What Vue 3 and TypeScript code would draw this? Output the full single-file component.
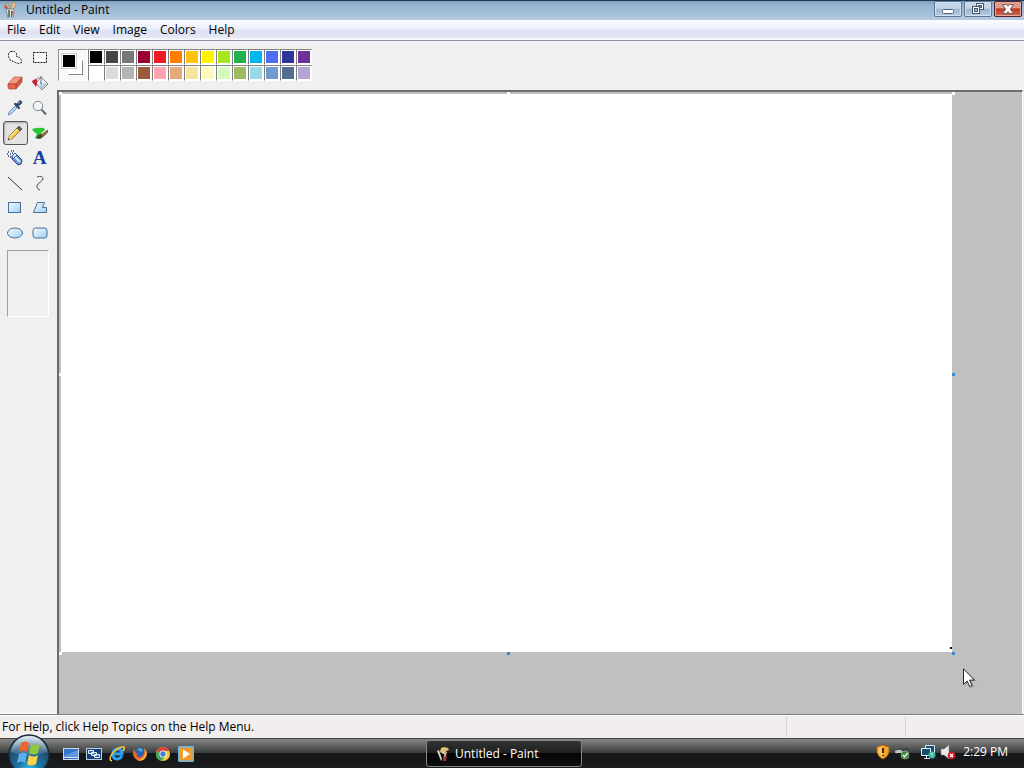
<script setup lang="ts">
import { ref } from 'vue'

const menus: string[] = ['File', 'Edit', 'View', 'Image', 'Colors', 'Help']

const tools: string[] = [
  'Free-Form Select', 'Select', 'Eraser', 'Fill With Color',
  'Pick Color', 'Magnifier', 'Pencil', 'Brush',
  'Airbrush', 'Text', 'Line', 'Curve',
  'Rectangle', 'Polygon', 'Ellipse', 'Rounded Rectangle',
]
const activeTool = ref<string>('Pencil')

const colors: string[] = [
  '#000000', '#464646', '#787878', '#990030', '#ed1c24', '#ff7e00', '#ffc20e',
  '#fff200', '#a8e61d', '#22b14c', '#00b7ef', '#4d6df3', '#2f3699', '#6f3198',
  '#ffffff', '#dcdcdc', '#b4b4b4', '#9c5a3c', '#ffa3b1', '#e5aa7a', '#f5e49c',
  '#fff9bd', '#d3f9bc', '#9dbb61', '#99d9ea', '#709ad1', '#546d8e', '#b5a5d5',
]
const foreground = ref<string>('#000000')

const handles: string[] = ['tl', 'tc', 'tr', 'ml', 'mr', 'bl', 'bc', 'br']
</script>

<template>
  <div class="desktop">
    <header class="titlebar">
      <svg class="app-icon" viewBox="0 0 16 16" aria-hidden="true">
        <path d="M5 7 3 2l2-1 3 6zM9 7l1-6 3-1 1 3-3 5z" fill="#e5c28d" stroke="#99784f" stroke-width=".6" />
        <path d="M3 3 2 5l3 3 1-3z" fill="#c95740" />
        <path d="M4 7h8l-1 9H6z" fill="#dce6e5" stroke="#62747b" stroke-width=".7" />
        <path d="M6 8h2v7H6z" fill="#66806b" /><path d="M9 9h2l-1 6H9z" fill="#bd352b" />
      </svg>
      <h1>Untitled - Paint</h1>
      <div class="window-buttons">
        <button aria-label="Minimize">
          <svg width="26" height="14" viewBox="0 0 26 14"><rect x="7.500" y="7.500" width="11" height="4" rx="1" fill="#fff" stroke="#526277" /></svg>
        </button>
        <button aria-label="Restore">
          <svg width="26" height="14" viewBox="0 0 26 14" stroke="#465870"><rect x="11.500" y="1.500" width="7" height="6" fill="#fff" /><rect x="13.500" y="3.500" width="3" height="2" fill="#9fb3cc" /><rect x="7.500" y="4.500" width="7" height="7" fill="#fff" /><rect x="9.500" y="6.500" width="3" height="3" fill="#9fb3cc" /></svg>
        </button>
        <button class="close" aria-label="Close">
          <svg width="26" height="14" viewBox="0 0 26 14"><path d="M7.500 2.500h4L13 4.300l1.500-1.800h4L15.300 7l3.200 4.500h-4L13 9.700l-1.500 1.800h-4L10.700 7z" fill="#fff" stroke="#623c3c" stroke-width=".8" /></svg>
        </button>
      </div>
    </header>

    <nav class="menubar">
      <button v-for="m in menus" :key="m">{{ m }}</button>
    </nav>

    <main class="body">
      <aside class="toolbox">
        <div class="tools">
          <button
            v-for="t in tools"
            :key="t"
            :aria-label="t"
            :class="{ active: t === activeTool }"
            @click="activeTool = t"
          >
            <svg v-if="t !== 'Text'" width="16" height="16" viewBox="0 0 16 16" fill="none">
              <defs>
                <linearGradient id="blueFill" x1="0" y1="0" x2="1" y2="1">
                  <stop offset="0" stop-color="#f2faff" /><stop offset="1" stop-color="#9fd0f5" />
                </linearGradient>
              </defs>
              <path v-if="t === 'Free-Form Select'" d="M3.500 1.500h4l2 2v3l3 1 2 3v2l-3 1-3-1-2-1-3-1-2-4v-3z" fill="#fafafa" stroke="#111" stroke-dasharray="2 1" />
              <path v-else-if="t === 'Select'" d="M1.500 2.500h13v10h-13z" fill="#fafafa" stroke="#111" stroke-dasharray="2 1" />
              <g v-else-if="t === 'Eraser'">
                <path d="M7 2h8L9 9H1z" fill="#f49a83" stroke="#bb4f3b" stroke-width=".7" />
                <path d="M1 9h8v5H2l-1-2z" fill="#e8694f" stroke="#aa4030" stroke-width=".7" />
                <path d="m15 2-6 7v5l6-7z" fill="#cf5640" stroke="#a43b2d" stroke-width=".6" />
              </g>
              <g v-else-if="t === 'Fill With Color'">
                <path d="m4 8 5-6 7 7-6 6z" fill="#eef3f5" stroke="#6b777e" stroke-width=".9" />
                <path d="m10 14 5-5-2-1-6 4z" fill="#b4c8d3" />
                <path d="M9 1v7" stroke="#666" stroke-width=".9" />
                <path d="M8 3Q5 2 3 5" stroke="#888" stroke-width=".8" />
                <path d="m5 4-4 1-1 2 1 1 3 4 1-3z" fill="#c72435" />
                <circle cx="9" cy="8.500" r="1.200" fill="#5fa9bd" />
              </g>
              <g v-else-if="t === 'Pick Color'">
                <path d="m1 15 1-3 6-6 2 2-6 6z" fill="#b4d3f1" stroke="#6287ae" stroke-width=".8" />
                <path d="m7 4 5 5 1-1-2-2 3-2c2-2 0-4-2-3L10 4 8 3z" fill="#35466f" stroke="#202d4e" stroke-width=".6" />
                <path d="m11 3 2-1" stroke="#aebfe3" />
              </g>
              <g v-else-if="t === 'Magnifier'">
                <circle cx="6" cy="6" r="4.700" fill="#f3f6f8" stroke="#7d8286" />
                <path d="M4 4q1-1 3-1" stroke="#fff" /><path d="m9.500 9.500 4.500 5" stroke="#63686e" stroke-width="2" />
              </g>
              <g v-else-if="t === 'Pencil'">
                <path d="m1 15 1-4 8-8 3 3-8 8z" fill="#f6ca55" stroke="#8c6c24" stroke-width=".8" />
                <path d="m3 11 8-7" stroke="#fff3a7" /><path d="m1 15 1-4 3 3z" fill="#f5d7a5" /><path d="m1 15 .5-2 1.500 1.500z" fill="#222" />
                <path d="m10 3 2-2 3 3-2 2z" fill="#6a6270" stroke="#3b3947" stroke-width=".7" />
              </g>
              <g v-else-if="t === 'Brush'">
                <path d="M0 4q6-2 12-1l1 2-4 3 1 4-4 2-3-1 2-4-3-2z" fill="#26c836" />
                <path d="m16 5-6 4-2 1 1 2 3-1 4-4z" fill="#96764b" stroke="#554126" stroke-width=".6" />
                <path d="m9 9-3 1-2 3 4 1 3-2z" fill="#4a4a2d" />
              </g>
              <g v-else-if="t === 'Airbrush'">
                <path d="M1 2h1M4 1h1M3 4h1M1 6h1M5 3h1M3 7h1M0 4h1M6 1h1" stroke="#233f87" stroke-width="1.400" />
                <path d="m5 6 3-3 7 7-1 4-3 1-6-6z" fill="#6d98da" stroke="#244078" />
                <path d="m7 6 6 6" stroke="#d1e8ff" stroke-width="2" /><path d="m5 6 3-3 2 2-4 4z" fill="#dbe6f4" stroke="#30497d" stroke-width=".8" />
              </g>
              <path v-else-if="t === 'Line'" d="m1 2 14 13" stroke="#333" />
              <path v-else-if="t === 'Curve'" d="M5 2q6-2 6 2Q10 6 6 9q-3 4 2 6" stroke="#4e4e4e" />
              <rect v-else-if="t === 'Rectangle'" x="1.500" y="2.500" width="12" height="10" fill="url(#blueFill)" stroke="#456f96" />
              <path v-else-if="t === 'Polygon'" d="M5.500 2.500h7l-2 5h4v5h-13z" fill="url(#blueFill)" stroke="#52718f" />
              <ellipse v-else-if="t === 'Ellipse'" cx="8" cy="8" rx="7.500" ry="5" fill="url(#blueFill)" stroke="#456f96" />
              <rect v-else-if="t === 'Rounded Rectangle'" x="1" y="3" width="14" height="10" rx="2.500" fill="url(#blueFill)" stroke="#456f96" />
            </svg>
            <span v-else class="letter">A</span>
          </button>
        </div>
        <div class="options"></div>
      </aside>

      <section class="editor">
        <div class="palette">
          <div class="current">
            <div class="pair">
              <span class="back"></span>
              <span class="fore" :style="{ backgroundColor: foreground }"></span>
            </div>
          </div>
          <div class="swatches">
            <button
              v-for="c in colors"
              :key="c"
              :aria-label="'Color ' + c"
              :style="{ backgroundColor: c }"
              @click="foreground = c"
            ></button>
          </div>
        </div>
        <div class="workspace">
          <div class="sheet">
            <i v-for="h in handles" :key="h" class="handle" :class="h"></i>
            <i class="dot"></i>
          </div>
          <svg class="pointer" width="14" height="20" viewBox="0 0 14 20">
            <path d="M2 3v15l4-4 2 6 3-1-2-6h5z" fill="#777" opacity=".35" />
            <path d="M.5.8v15.500l3.600-3.300 2.600 5.500 2.400-1-2.500-5.400h4.800z" fill="#fff" stroke="#222" />
          </svg>
        </div>
      </section>
    </main>

    <footer class="statusbar">
      <p>For Help, click Help Topics on the Help Menu.</p>
      <span></span>
      <span></span>
    </footer>

    <div class="taskbar">
      <div class="launch">
        <button class="start" aria-label="Start">
          <svg width="42" height="42" viewBox="0 0 42 42">
            <defs>
              <radialGradient id="orb" cx=".5" cy=".92" r=".85">
                <stop offset="0" stop-color="#35d4ef" /><stop offset=".35" stop-color="#1b75a7" /><stop offset=".75" stop-color="#234c6c" /><stop offset="1" stop-color="#8da9ba" />
              </radialGradient>
              <linearGradient id="shine" x1="0" y1="0" x2="0" y2="1">
                <stop offset="0" stop-color="#e9f2f7" stop-opacity=".9" /><stop offset="1" stop-color="#7da4ba" stop-opacity=".25" />
              </linearGradient>
            </defs>
            <circle cx="21" cy="21" r="20" fill="url(#orb)" stroke="#172c3a" stroke-width="1.500" />
            <path d="M3 18C5 7 12 2 21 2s16 5 18 16q-18 7-36 0" fill="url(#shine)" />
            <path d="M13 9q4-3 8 0l-2 9q-4-3-8 0z" fill="#ee6330" />
            <path d="M23 10q5 3 9-1l-2 10q-5 3-9 0z" fill="#92c83e" />
            <path d="M11 20q4-3 8 0l-2 9q-4-3-8 0z" fill="#5daee6" />
            <path d="M21 21q4 3 9 0l-2 9q-5 3-9 0z" fill="#ffd34c" />
          </svg>
        </button>
        <button aria-label="Show desktop">
          <svg width="16" height="16" viewBox="0 0 16 16"><rect x=".5" y="2.500" width="15" height="11" fill="#3474ca" stroke="#c9d9ed" /><path d="M1 10 15 4v7H1z" fill="#5f9ae0" /><path d="M1 11.500h14" stroke="#cfdded" /><path d="M2 12.500h3" stroke="#2d4670" /></svg>
        </button>
        <button aria-label="Switch between windows">
          <svg width="16" height="16" viewBox="0 0 16 16"><rect x=".5" y="2.500" width="15" height="11" fill="#163f78" stroke="#b9cee5" /><g fill="#315f9e" stroke="#e9f3ff"><path d="M2.500 4.500h5v3h-5zM5.500 6.500h5v3h-5zM8.500 8.500h5v3h-5z" /></g></svg>
        </button>
        <button aria-label="Internet Explorer">
          <svg width="16" height="16" viewBox="0 0 16 16" fill="none"><path d="M13 10q-2 3-5 3-4 0-4-5t5-5q4 0 4 5H5" stroke="#2f9fee" stroke-width="3" /><path d="M3 15Q-1 14 3 8 9 0 15 1q1 1-1 4" stroke="#ffc52f" stroke-width="1.500" /></svg>
        </button>
        <button aria-label="Firefox">
          <svg width="16" height="16" viewBox="0 0 16 16"><circle cx="8" cy="8" r="6.500" fill="#2865ae" /><path d="M2 3Q-1 10 5 14q7 2 9-3 2-4-2-8 1 4-1 6-3 4-6 1-1-1 1-2-3-1-4-5" fill="#ed6528" /><path d="M12 2q5 5 1 10-3 4-8 2 7-1 8-6 0-4-1-6" fill="#ffb43b" /><path d="m5 3 3-1 3 2-2 2z" fill="#57a3df" /></svg>
        </button>
        <button aria-label="Chrome">
          <svg width="16" height="16" viewBox="0 0 16 16"><circle cx="8" cy="8" r="7" fill="#f4ca39" /><path d="M2 4Q4 1 8 1q5 0 6.500 4H8L5 9z" fill="#dc4639" /><path d="m2 4 4 6 3 1-2 4Q1 14 1 8z" fill="#3ca85b" /><circle cx="8" cy="8" r="3.600" fill="#fff" /><circle cx="8" cy="8" r="2.700" fill="#427fd5" /></svg>
        </button>
        <button aria-label="Media Player">
          <svg width="16" height="16" viewBox="0 0 16 16"><rect x=".7" y=".7" width="14.600" height="14.600" rx="1" fill="#f39a2e" stroke="#68b8e7" stroke-width="1.500" /><path d="M5 3.500v9L12 8z" fill="#fff" /></svg>
        </button>
      </div>
      <button class="task">
        <svg class="app-icon" viewBox="0 0 16 16" aria-hidden="true">
          <path d="M5 6 6 2l3-1 4 1 1 2-3 1-1 3H8z" fill="#e5bd72" />
          <path d="m2 5 2-1 3 9-1 2z" fill="#cbd2cd" /><path d="m10 5 2 1-2 8-2-1z" fill="#b9b3a0" /><path d="m8 11 4-1-1 5H8z" fill="#ad2e2e" />
        </svg>
        Untitled - Paint
      </button>
      <div class="tray">
        <button aria-label="Security alert">
          <svg width="14" height="16" viewBox="0 0 14 16"><path d="m7 1 6 2v5q-1 5-6 7-5-2-6-7V3z" fill="#f5a42b" stroke="#a96816" /><path d="M7 2v12q-4-2-5-6V4z" fill="#ffd16c" opacity=".7" /><path d="M7 4v5M7 11v1" stroke="#422608" stroke-width="2" /></svg>
        </button>
        <button class="device" aria-label="Safely remove hardware">
          <svg width="16" height="16" viewBox="0 0 16 16"><path d="M1 8q0-2 3-2l5 0v3H4q-3 1-3-1" fill="#bfc5c9" /><path d="M7 4h8v2l-3 1-4 1z" fill="#3d4a4a" /><circle cx="11" cy="11" r="4" fill="#3d8541" stroke="#a5c7a6" stroke-width=".6" /><path d="m9 11 1.500 2 3-4" fill="none" stroke="#e9ffe9" stroke-width="1.300" /></svg>
        </button>
        <button aria-label="Network">
          <svg width="16" height="16" viewBox="0 0 16 16"><path d="M5.500 1.500h9v8h-9z" fill="#17506d" stroke="#d8ecf5" /><path d="M1.500 4.500h9v7h-9z" fill="#174d70" stroke="#e6f5fc" /><path d="M4 14.500h6M6.500 12v2" stroke="#dbe7ee" /><circle cx="12" cy="11" r="3.500" fill="#36b5a3" /><path d="m10 10 3-2v5z" fill="#86e1b0" /></svg>
        </button>
        <button aria-label="Volume muted">
          <svg width="16" height="16" viewBox="0 0 16 16"><path d="M1 5h3l5-4v14l-5-4H1z" fill="#e8ecef" stroke="#777f86" stroke-width=".6" /><circle cx="11.500" cy="11.500" r="3.800" fill="#d61c27" /><path d="m10 10 3 3m0-3-3 3" stroke="#fff" stroke-width="1.200" /></svg>
        </button>
        <time>2:29 PM</time>
      </div>
    </div>
  </div>
</template>

<style>
html,
body {
  margin: 0;
}
</style>

<style scoped>
.desktop {
  display: flex;
  flex-direction: column;
  min-height: 100vh;
  background: #f0f0f0;
  color: #000;
  font: 12px/16px "Open Sans", "Noto Sans", sans-serif;
}
.desktop * {
  box-sizing: border-box;
}
button {
  margin: 0;
  padding: 0;
  border: 0;
  background: none;
  color: inherit;
  font: inherit;
}
svg {
  display: block;
  flex: none;
}
.titlebar {
  display: flex;
  align-items: center;
  gap: 8px;
  height: 20px;
  padding: 0 2px 1px;
  border-top: 1px solid #1e3853;
  background: linear-gradient(#7f9fc0, #98b3cf 20%, #a2bdd8 60%, #b5cbdf);
}
.app-icon {
  width: 16px;
  height: 16px;
}
h1 {
  flex: 1;
  margin: 0;
  font: inherit;
}
.window-buttons {
  display: flex;
  gap: 2px;
  align-self: flex-start;
}
.window-buttons button {
  display: flex;
  align-items: center;
  justify-content: center;
  width: 28px;
  height: 16px;
  border: 1px solid #5f7895;
  border-radius: 2px;
  box-shadow: inset 0 0 0 1px #d3e0ef;
  background: linear-gradient(#c5d6e9 45%, #9db6d1 50%, #b4cce4);
}
.window-buttons .close {
  border-color: #52202a;
  box-shadow: inset 0 0 0 1px #e6aaa0;
  background: linear-gradient(#dc9a8c 40%, #b83a26 50%, #d2694c);
}
.menubar {
  display: flex;
  gap: 13px;
  height: 21px;
  padding-left: 7px;
  border-bottom: 1px solid #8b93a4;
  background: linear-gradient(#fbfcfe, #edf0f9 40%, #dde1f2 55%, #e2e6f5 85%, #fff);
}
.menubar button {
  height: 20px;
}
.body {
  display: grid;
  flex: 1;
  grid-template-columns: 57px 1fr;
}
.toolbox {
  padding: 5px 4px 0 3px;
}
.tools {
  display: grid;
  grid-template-columns: 25px 25px;
  grid-auto-rows: 24px;
  gap: 1px 0;
}
.tools button {
  display: flex;
  align-items: center;
  justify-content: center;
  padding-right: 2px;
  border-radius: 3px;
}
.tools .active {
  border: 1px solid #555;
  background: #e4e4e2;
  box-shadow: inset 1px 1px 2px #aaa;
}
.letter {
  color: #123f9c;
  font: bold 19px/24px "Liberation Serif", serif;
}
.options {
  width: 42px;
  height: 67px;
  margin: 5px 0 0 4px;
  border: 1px solid;
  border-color: #a0a0a0 #fff #fff #a0a0a0;
}
.editor {
  display: flex;
  flex-direction: column;
  min-width: 0;
}
.palette {
  display: flex;
  height: 49px;
  padding: 8px 0 0 1px;
}
.current {
  display: flex;
  align-items: center;
  justify-content: center;
  width: 30px;
  height: 32px;
  padding: 0 2px 1px 0;
  border: 1px solid;
  border-color: #909090 #fff #fff #909090;
  background: #f8f8f8;
}
.pair {
  display: grid;
  grid-template-columns: 6px 8px 7px;
  grid-template-rows: 6px 8px 7px;
}
.back {
  grid-area: 2 / 2 / 4 / 4;
  border: 1px solid;
  border-color: #fff #888 #888 #fff;
  background: #fff;
}
.fore {
  grid-area: 1 / 1 / 3 / 3;
  border: 1px solid #fff;
  outline: 1px solid #ccc;
}
.swatches {
  display: grid;
  grid-template-columns: repeat(14, 16px);
  grid-auto-rows: 16px;
}
.swatches button {
  border: 1px solid;
  border-color: #808080 #fff #fff #808080;
  box-shadow: inset 0 0 0 1px #fff;
}
.workspace {
  position: relative;
  display: flex;
  flex: 1;
  margin-right: 1px;
  padding: 2px 70px 62px 2px;
  border: solid #6a6e70;
  border-width: 2px 0 0 2px;
  border-right: 1px solid #fff;
  background: #c0c0c0;
}
.sheet {
  position: relative;
  flex: 1;
  background: #fff;
}
.handle {
  position: absolute;
  width: 3px;
  height: 3px;
  background: #fff;
}
.tl, .tc, .tr {
  top: -2px;
}
.bl, .bc, .br {
  bottom: -3px;
}
.tl, .ml, .bl {
  left: -2px;
}
.tr, .mr, .br {
  right: -3px;
}
.tc, .bc {
  left: 50%;
}
.ml, .mr {
  top: 50%;
}
.mr, .bc, .br {
  background: #3f87c8;
}
.dot {
  position: absolute;
  right: 0;
  bottom: 3px;
  width: 2px;
  height: 2px;
  background: #000;
}
.pointer {
  position: absolute;
  right: 45px;
  bottom: 26px;
}
.statusbar {
  display: grid;
  grid-template-columns: 1fr 119px 119px;
  align-items: center;
  height: 24px;
  border-top: 1px solid #808080;
  box-shadow: 0 -1px #fff, inset 0 1px #fff;
  background: #f1eeed;
}
.statusbar p {
  margin: 0;
  padding: 1px 0 0 2px;
}
.statusbar span {
  height: 20px;
  border-left: 1px solid #d5d2d0;
}
.taskbar {
  display: grid;
  grid-template-columns: 426px 156px 1fr;
  height: 30px;
  border-top: 1px solid #444;
  background: linear-gradient(#848785, #5e605f 25%, #3d3e3e 47%, #151617 50%, #1b1c1d);
  color: #fff;
}
.launch {
  display: flex;
  align-items: center;
  gap: 7px;
  padding-left: 8px;
}
.launch .start {
  position: relative;
  align-self: flex-start;
  height: 34px;
  margin: -5px 6px 0 0;
  overflow: hidden;
}
.task {
  display: flex;
  align-items: center;
  gap: 4px;
  height: 27px;
  margin-top: 1px;
  padding-left: 8px;
  border: 1px solid #858585;
  border-radius: 3px;
  background: linear-gradient(#303232, #202121 48%, #050505 50%, #0e0e0e);
}
.tray {
  display: flex;
  align-items: center;
  justify-content: flex-end;
  gap: 4px;
  padding: 0 16px 3px 0;
}
.tray .device {
  margin-right: 6px;
}
.tray time {
  margin-left: 3px;
}
</style>
